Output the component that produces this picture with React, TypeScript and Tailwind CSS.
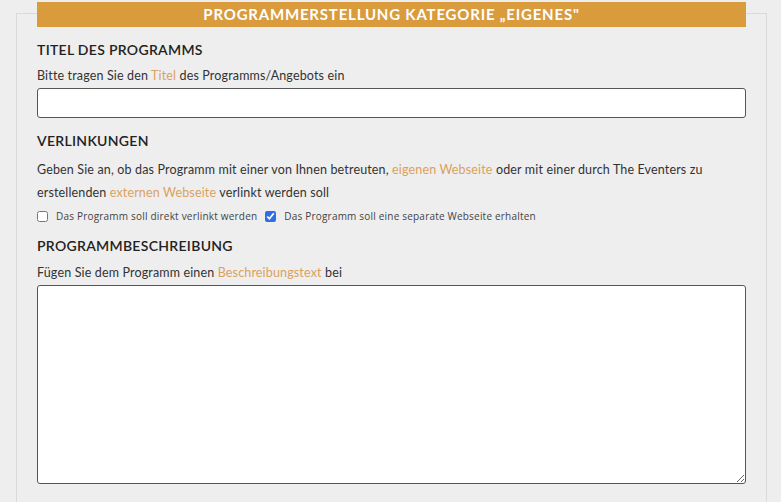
import { useState } from 'react'

const link = 'text-[#dba15c]'

export default function App() {
  const [direct, setDirect] = useState(false)
  const [separate, setSeparate] = useState(true)

  return (
    <div className="min-h-screen bg-[#eeeeee] pt-[13px] font-['Lato',sans-serif] text-[#333]">
      <div className="ml-[16px] w-[751px] min-h-[489px] border-l border-r border-t border-[#dadada]">
        {/* Header */}
        <div className="-mt-[12px] mx-[20px] h-[25px] bg-[#d99b3c] flex items-center justify-center">
          <h1 className="font-bold text-[15px] text-white tracking-[0.8px] uppercase">
            Programmerstellung Kategorie „Eigenes"
          </h1>
        </div>

        <div className="px-[20px] text-[12.5px] tracking-[0.15px]">
          {/* Titel */}
          <h2 className="mt-[13px] text-[14px] font-semibold uppercase tracking-[0.3px] leading-[20px] text-[#222]">
            Titel des Programms
          </h2>
          <p className="mt-[7px] leading-[18px]">
            Bitte tragen Sie den <span className={link}>Titel</span> des Programms/Angebots ein
          </p>
          <input
            type="text"
            className="mt-[3px] block w-full h-[30px] bg-white border-[1.5px] border-[#555] rounded-[3px] px-2 text-[12px] outline-none"
          />

          {/* Verlinkungen */}
          <h2 className="mt-[13px] text-[14px] font-semibold uppercase tracking-[0.3px] leading-[20px] text-[#222]">
            Verlinkungen
          </h2>
          <p className="mt-[7px] leading-[23px]">
            Geben Sie an, ob das Programm mit einer von Ihnen betreuten,{' '}
            <span className={link}>eigenen Webseite</span> oder mit einer durch The Eventers zu
            <br />
            erstellenden <span className={link}>externen Webseite</span> verlinkt werden soll
          </p>
          <div className="mt-[5px] flex items-center text-[10px] font-['Open_Sans',sans-serif] text-[#444] tracking-[0.2px]">
            <label className="flex items-center gap-[8px]">
              <input
                type="checkbox"
                checked={direct}
                onChange={() => setDirect(!direct)}
                className="w-[11px] h-[11px] m-0 accent-[#2f6fe4]"
              />
              Das Programm soll direkt verlinkt werden
            </label>
            <label className="ml-[8px] flex items-center gap-[8px]">
              <input
                type="checkbox"
                checked={separate}
                onChange={() => setSeparate(!separate)}
                className="w-[11px] h-[11px] m-0 accent-[#2f6fe4]"
              />
              Das Programm soll eine separate Webseite erhalten
            </label>
          </div>

          {/* Beschreibung */}
          <h2 className="mt-[12px] text-[14px] font-semibold uppercase tracking-[0.3px] leading-[20px] text-[#222]">
            Programmbeschreibung
          </h2>
          <p className="mt-[8px] leading-[18px]">
            Fügen Sie dem Programm einen <span className={link}>Beschreibungstext</span> bei
          </p>
          <textarea className="mt-[3px] block w-full h-[199px] bg-white border-[1.5px] border-[#555] rounded-[3px] p-2 text-[12px] outline-none" />
        </div>
      </div>
    </div>
  )
}
